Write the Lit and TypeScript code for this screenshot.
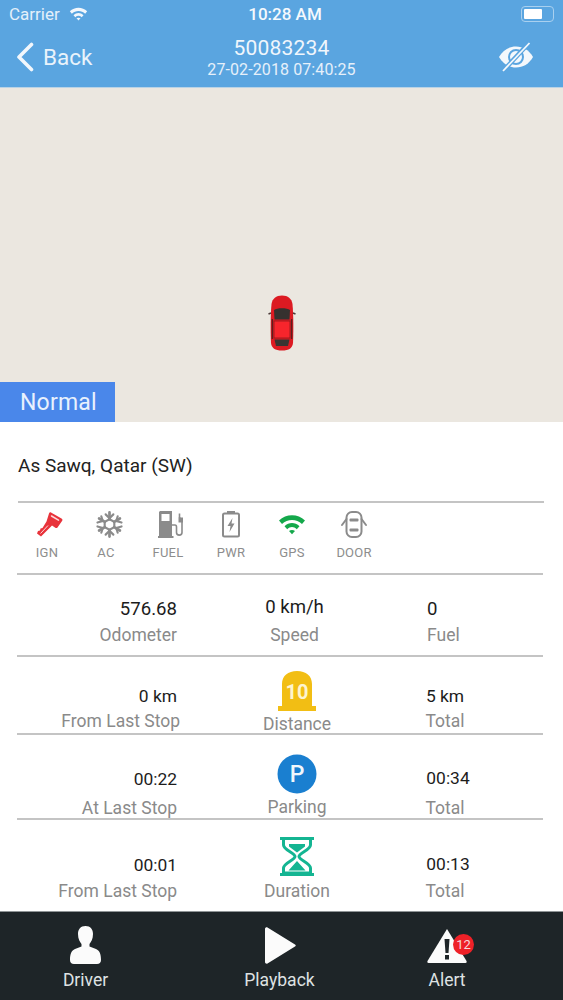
import { LitElement, html, css, svg } from "lit";
import { customElement } from "lit/decorators.js";

const wifi = (c: string) => svg`<path d="M1 6.500C8 -0.500 20 -0.500 27 6.500L24 10C18.500 4.800 9.500 4.800 4 10Z" fill="${c}"/><path d="M6.500 12.200C11 8 17 8 21.500 12.200L18.800 15.200C15.800 12.400 12.200 12.400 9.200 15.200Z" fill="${c}"/><path d="M11 17C12.800 15.600 15.200 15.600 17 17L14 20.200Z" fill="${c}"/>`;

const icons = {
  key: svg`<svg width="28" height="27" viewBox="0 0 28 27"><path d="M15 1.500L25.500 7.500C26.500 8 26.700 9 26.200 9.800L21.500 16.500C21 17.200 20 17.300 19.300 16.800L16 14.500L5 25.500L1 22.500L2 20L4 19.500L4.500 17.500L6.500 17L10.500 10.500L13 2.500C13.400 1.300 14.200 1 15 1.500Z" fill="#e8333b"/><path d="M15.500 5L22.500 9.200" stroke="#fcdcdd" stroke-width="1.500" fill="none" stroke-linecap="round"/><path d="M4.500 22.500L12 14.500" stroke="#fcdcdd" stroke-width="1" fill="none"/></svg>`,
  snow: svg`<svg width="27" height="27" viewBox="0 0 28 28" fill="none" stroke="#8b8b8b" stroke-width="2.800" stroke-linecap="round"><path d="M14 1.500V8.500M14 19.500V26.500M3.200 7.800L9.200 11.200M18.800 16.800L24.800 20.200M24.800 7.800L18.800 11.200M9.200 16.800L3.200 20.200"/><path d="M14 8.500L19 11.200V16.800L14 19.500L9 16.800V11.200Z" stroke-width="2.200"/><path d="M10 3.500L14 7.500L18 3.500M10 24.500L14 20.500L18 24.500M1.500 12L7 10.500L5.500 5.500M26.500 12L21 10.500L22.500 5.500M1.500 16L7 17.500L5.500 22.500M26.500 16L21 17.500L22.500 22.500" stroke-width="2.200"/></svg>`,
  fuel: svg`<svg width="26" height="27" viewBox="0 0 26 27"><path d="M2 0H14V25H15.500V27H0V25H1V1Z" fill="#8b8b8b"/><path d="M3.500 3H11.500V10H3.500Z" fill="#fff"/><path d="M14 14H17C18.200 14 18.500 15 18.500 16V21.500C18.500 25 24 25 24 21.500V9L21.500 6.500V2.500" fill="none" stroke="#8b8b8b" stroke-width="1.600"/><path d="M20.500 6.500H25V11.500H20.500Z" fill="#8b8b8b"/></svg>`,
  battery: svg`<svg width="20" height="28" viewBox="0 0 20 28"><path d="M6 1H14V3H6Z" fill="#8b8b8b"/><rect x="2" y="3.500" width="16" height="23" rx="1.500" fill="none" stroke="#8b8b8b" stroke-width="2"/><path d="M11.500 8L6.500 16H9.500L8.500 22L13.500 13.500H10.500Z" fill="#8b8b8b"/></svg>`,
  gps: svg`<svg width="28" height="21" viewBox="0 0 28 21">${wifi("#14a84b")}</svg>`,
  door: svg`<svg width="28" height="28" viewBox="0 0 28 28" fill="none" stroke="#8b8b8b" stroke-width="2"><rect x="6.500" y="2" width="15" height="25" rx="5.500"/><path d="M6.500 9L2 15M21.500 9L26 15" stroke-linecap="round"/><rect x="9.500" y="8.500" width="9" height="3" fill="#8b8b8b" stroke="none" rx="1"/><rect x="9.500" y="18.500" width="9" height="3" fill="#8b8b8b" stroke="none" rx="1"/></svg>`,
};

@customElement("app-root")
export class AppRoot extends LitElement {
  static styles = css`
    :host { display: block; width: 563px; height: 1000px; overflow: hidden; font-family: Roboto, "Liberation Sans", sans-serif; background: #fff; }
    .page { display: flex; flex-direction: column; height: 1000px; }
    header { height: 87px; flex: none; background: #5aa5e0; color: #fff; border-bottom: 1px solid #b9d3e6; }
    .status { height: 28px; padding: 0 9px; display: grid; grid-template-columns: 1fr auto 1fr; align-items: center; font-size: 17px; color: #e4f0fa; }
    .carrier { display: flex; align-items: center; gap: 9px; }
    .time { font-size: 17px; font-weight: 500; color: #f5f9fd; margin-left: 7px; }
    .batt { justify-self: end; width: 33px; height: 16px; border: 1px solid #a9d0ef; border-radius: 4px; padding: 2px; box-sizing: border-box; display: flex; }
    .batt i { display: block; width: 18px; background: #fff; border-radius: 1px; }
    .nav { display: grid; grid-template-columns: 1fr auto 1fr; height: 59px; align-items: start; padding: 0 29px 0 16px; }
    .back { display: flex; align-items: center; gap: 8px; font-size: 22.5px; margin-top: 13px; color: #e9f3fb; height: 32px; }
    .title { text-align: center; margin-left: 13px; }
    .id { font-size: 21px; line-height: 24px; margin-top: 8px; color: #f0f6fc; letter-spacing: 0.2px; }
    .date { font-size: 16px; line-height: 20px; color: #e6f0fa; letter-spacing: 0.1px; }
    .eye { justify-self: end; margin-top: 14px; }
    .map { height: 334px; flex: none; background: #ebe7e0; position: relative; display: flex; justify-content: center; }
    .car { margin-top: 207px; margin-left: 1px; width: 30px; height: 56px; }
    .badge { position: absolute; left: 0; bottom: 0; width: 115px; height: 40px; background: #4a87ea; color: #e8f1fd; font-size: 23px; display: flex; align-items: center; padding-left: 20px; box-sizing: border-box; letter-spacing: 0.2px; }
    .addr { height: 79px; flex: none; padding: 8px 18px 0; display: flex; align-items: center; box-sizing: border-box; font-size: 19px; color: #222; }
    .rule { height: 2px; background: #c4c4c4; margin: 0 19px 0 18px; flex: none; }
    .rule.wide { margin: 0 20px 0 17px; }
    .flags { height: 70px; flex: none; padding-left: 17px; display: grid; grid-template-columns: 60px 58px 66px 60px 62px 62px; }
    .flag { display: flex; flex-direction: column; align-items: center; }
    .flag .ic { height: 28px; margin-top: 7px; display: flex; align-items: center; }
    .flag .off5 { margin-left: 5px; }
    .flag .off6 { margin-left: 6px; }
    .flag span { font-size: 13px; color: #8d8d8d; line-height: 16px; margin-top: 7px; letter-spacing: 0.2px; }
    .row { flex: none; padding-left: 16px; display: grid; grid-template-columns: 164px 234px 62px; }
    .r1 { height: 80px; } .r2 { height: 76px; } .r3 { height: 83px; } .r4 { height: 91px; }
    .cell { display: flex; flex-direction: column; }
    .left { align-items: flex-end; } .mid, .right { align-items: center; }
    .v { font-size: 17.4px; line-height: 20px; color: #1c1c1c; }
    .l { font-size: 17.5px; line-height: 20px; color: #8a8a8a; white-space: nowrap; }
    .in { padding-right: 3px; }
    .ic2 { display: block; }
    .r1 .v { font-size: 18.6px; }
    .r1 .cell { padding-top: 24px; gap: 6px; }
    .r1 .mid { padding-top: 22px; gap: 8px; padding-right: 5px; }
    .r1 .right { align-items: flex-start; padding-left: 13px; }
    .r2 .cell { padding-top: 29px; gap: 5px; }
    .r2 .mid { padding-top: 13px; gap: 5px; }
    .r2 .mid .l { line-height: 16px; }
    .r2 .left .v { margin-right: 3px; }
    .r3 .cell { padding-top: 34px; gap: 9px; }
    .r3 .mid { padding-top: 19px; gap: 3px; }
    .r3 .right { padding-top: 33px; gap: 10px; }
    .r3 .right .v, .r4 .right .v { margin-left: 6px; }
    .r4 .cell { padding-top: 35px; gap: 6px; }
    .r4 .mid { padding-top: 17px; gap: 5px; }
    .r4 .right { padding-top: 34px; gap: 7px; }
    footer { flex: 1; background: #1e2528; display: grid; grid-template-columns: 171px 217px 1fr; color: #dfe2e3; font-size: 17.5px; border-top: 1px solid #8f9496; }
    .tab { display: flex; flex-direction: column; align-items: center; }
    .tab .ic { height: 38px; margin-top: 14px; display: flex; align-items: center; }
    .tab span { line-height: 22px; margin-top: 5px; }
    .tab:nth-child(3) { padding-right: 57px; }
    .alert { position: relative; display: flex; }
    .count { position: absolute; left: 26px; top: 6px; width: 21px; height: 21px; border-radius: 50%; background: #ee2128; color: #f7d9da; font-size: 13px; display: flex; align-items: center; justify-content: center; }
  `;

  flag(icon: unknown, label: string, off = "") {
    return html`<div class="flag"><div class="ic ${off}">${icon}</div><span>${label}</span></div>`;
  }

  render() {
    return html`<div class="page">
      <header>
        <div class="status">
          <div class="carrier">Carrier <svg width="19" height="14" viewBox="0 0 28 21">${wifi("#f2f7fc")}</svg></div>
          <div class="time">10:28 AM</div>
          <div class="batt"><i></i></div>
        </div>
        <div class="nav">
          <div class="back"><svg width="19" height="30" viewBox="0 0 19 30" fill="none" stroke="#f2f7fc" stroke-width="3.600" stroke-linecap="round" stroke-linejoin="round"><path d="M15.500 2.500L3 15L15.500 27.500"/></svg>Back</div>
          <div class="title"><div class="id">50083234</div><div class="date">27-02-2018 07:40:25</div></div>
          <svg class="eye" width="36" height="30" viewBox="0 0 36 30"><path d="M1 15C5 8 11 4.500 18 4.500S31 8 35 15C31 22 25 25.500 18 25.500S5 22 1 15Z" fill="#f4f8fc"/><circle cx="18" cy="15" r="7" fill="none" stroke="#5aa5e0" stroke-width="2"/><path d="M31 1L5 29" stroke="#5aa5e0" stroke-width="4.500"/><path d="M31.500 1L5 29" stroke="#f4f8fc" stroke-width="1.800"/></svg>
        </div>
      </header>
      <div class="map">
        <svg class="car" viewBox="0 0 30 56"><path d="M15 .5C21 .5 24.500 3.500 25.500 9C26.500 20 26.500 38 26 48C25.500 53 22 55.500 15 55.500S4.500 53 4 48C3.500 38 3.500 20 4.500 9C5.500 3.500 9 .5 15 .5Z" fill="#dc1a22"/><path d="M7 15C10 12.500 20 12.500 23 15L22.500 24.500H7.500Z" fill="#35312f"/><rect x="7" y="26" width="16" height="17" fill="#f7252c" stroke="#8c1a1c" stroke-width=".8"/><path d="M7.500 44.500H22.500L21 51H9Z" fill="#3a3432"/><path d="M5.300 24V44M24.700 24V44" stroke="#51201f" stroke-width="1.200"/><path d="M4 18L1.500 19M26 18L28.500 19" stroke="#4a3a38" stroke-width="1.500"/></svg>
        <div class="badge">Normal</div>
      </div>
      <div class="addr">As Sawq, Qatar (SW)</div>
      <div class="rule"></div>
      <div class="flags">
        ${this.flag(icons.key, "IGN", "off5")}${this.flag(icons.snow, "AC", "off6")}${this.flag(icons.fuel, "FUEL", "off6")}${this.flag(icons.battery, "PWR")}${this.flag(icons.gps, "GPS")}${this.flag(icons.door, "DOOR")}
      </div>
      <div class="rule wide"></div>
      <div class="row r1">
        <div class="cell left"><div class="v in">576.68</div><div class="l in">Odometer</div></div>
        <div class="cell mid"><div class="v">0 km/h</div><div class="l">Speed</div></div>
        <div class="cell right"><div class="v">0</div><div class="l">Fuel</div></div>
      </div>
      <div class="rule wide"></div>
      <div class="row r2">
        <div class="cell left"><div class="v">0 km</div><div class="l">From Last Stop</div></div>
        <div class="cell mid">
          <svg class="ic2" width="40" height="41" viewBox="0 0 40 41"><path d="M5 36V14C5 6 11 1 20 1S35 6 35 14V36H39V41H1V36Z" fill="#f2be14"/><text x="20" y="29" text-anchor="middle" font-family="Roboto, sans-serif" font-size="20" font-weight="700" fill="#fdf4d0">10</text></svg>
          <div class="l">Distance</div>
        </div>
        <div class="cell right"><div class="v">5 km</div><div class="l">Total</div></div>
      </div>
      <div class="rule wide"></div>
      <div class="row r3">
        <div class="cell left"><div class="v in">00:22</div><div class="l in">At Last Stop</div></div>
        <div class="cell mid">
          <svg class="ic2" width="40" height="40" viewBox="0 0 40 40"><circle cx="20" cy="20" r="19.500" fill="#1a7fd0"/><text x="20" y="28" text-anchor="middle" font-family="Roboto, sans-serif" font-size="23" font-weight="500" fill="#f1f7fc">P</text></svg>
          <div class="l">Parking</div>
        </div>
        <div class="cell right"><div class="v">00:34</div><div class="l">Total</div></div>
      </div>
      <div class="rule wide"></div>
      <div class="row r4">
        <div class="cell left"><div class="v in">00:01</div><div class="l in">From Last Stop</div></div>
        <div class="cell mid">
          <svg class="ic2" width="36" height="39" viewBox="0 0 36 39"><path d="M1 1.500H35M1 37.500H35" stroke="#14b592" stroke-width="3" fill="none"/><path d="M4.500 3V8C4.500 13 16 16 16 19.500C16 23 4.500 26 4.500 31V36H31.500V31C31.500 26 20 23 20 19.500C20 16 31.500 13 31.500 8V3" fill="none" stroke="#14b592" stroke-width="3"/><path d="M10 7H26V9.500L18 15.500L10 9.500ZM18 24L26.500 33.500H9.500Z" fill="#14b592"/></svg>
          <div class="l">Duration</div>
        </div>
        <div class="cell right"><div class="v">00:13</div><div class="l">Total</div></div>
      </div>
      <footer>
        <div class="tab">
          <div class="ic"><svg width="31" height="38" viewBox="0 0 31 38"><path d="M15.500 0C20.500 0 23 3.500 23 8C23 13 21 16 19.500 18V20.500L26 23C29.500 24.500 31 28 31 34C31 36.500 29.500 38 27 38H4C1.500 38 0 36.500 0 34C0 28 1.500 24.500 5 23L11.500 20.500V18C10 16 8 13 8 8C8 3.500 10.500 0 15.500 0Z" fill="#fbfbfb"/></svg></div>
          <span>Driver</span>
        </div>
        <div class="tab">
          <div class="ic"><svg width="32" height="37" viewBox="0 0 32 37"><path d="M1 2C1 .5 2.500 0 3.500 .5L31 17.500C32 18 32 19 31 19.500L3.500 36.500C2.500 37 1 36.500 1 35Z" fill="#fbfbfb"/></svg></div>
          <span>Playback</span>
        </div>
        <div class="tab">
          <div class="ic"><div class="alert"><svg width="40" height="35" viewBox="0 0 40 35"><path d="M20 1L39.500 33C40 34 39.500 35 38.500 35H1.500C.5 35 0 34 .5 33Z" fill="#fbfbfb"/><path d="M17.500 11H22.500L21.500 25H18.500ZM18 27H22V31.500H18Z" fill="#1e2528"/></svg><div class="count">12</div></div></div>
          <span>Alert</span>
        </div>
      </footer>
    </div>`;
  }
}
